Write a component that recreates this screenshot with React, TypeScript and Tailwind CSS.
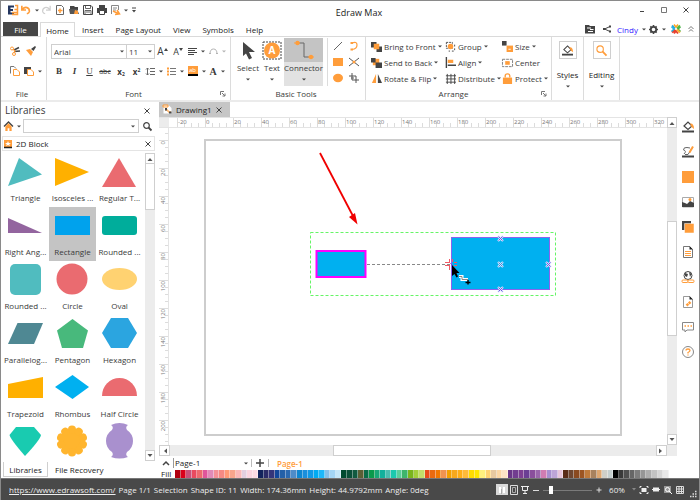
import type { ReactNode } from "react"

const ORANGE = "#ff9d3b"
const DARK = "#444444"

const menuTabs = ["Insert", "Page Layout", "View", "Symbols", "Help"]

const swatches = [
  "#b00012", "#d9001b", "#c8507a", "#e84a5f", "#ec6a6f", "#e0559b", "#e08ab8", "#f49097", "#f58a84", "#ff9a76", "#f7a58c", "#f9b8b8", "#e3cfe0", "#fbd5e0", "#fddbe4",
  "#12235c", "#2b2c68", "#34357a", "#12479a", "#2360a8", "#2a69b0", "#4f8cc9", "#0f86d0", "#1b8fdc", "#1199e6", "#00aaf2", "#1db7fa", "#85bfe9", "#a3d5f5", "#c5e6f8",
  "#004a30", "#0a4f38", "#115a40", "#5b5f35", "#0a6b48", "#0a9a4c", "#19a878", "#12b09c", "#4cbdb0", "#1bc9ae", "#5ccf9a", "#3db56c", "#7ab51d", "#a3cf3a", "#c3dd6a",
  "#e84a1a", "#e96a10", "#f07800", "#f29350", "#f5a000", "#f8a81c", "#ffae17", "#ffba3a", "#ffdc00", "#ffe600", "#fff07e", "#ffd271", "#e8c9a0", "#fcd7a5", "#fde3c5",
  "#6a3687", "#723d90", "#7d3f92", "#6b3f94", "#8a4f9c", "#9a66ab", "#d07cb2", "#a78fd0", "#bda5d8", "#e8c6dc",
  "#5a2c18", "#6e4630", "#8a4a20", "#9c5522", "#bf7b3c", "#a8825e", "#dda771", "#cfcfc8", "#c5cfcf",
  "#000000", "#3a3a3a", "#505050", "#666666", "#7d7d7d", "#969696", "#adadad", "#c3c3c3", "#d6d6d6", "#e9e9e9",
]

const shapes: { name: string; art: ReactNode; selected?: boolean }[] = [
  { name: "Triangle", art: <path d="M11 3 34 19.500 0 31Z" fill="#50bcbf" /> },
  { name: "Isosceles ...", art: <path d="M0 3 34 17 0 31Z" fill="#ffb000" /> },
  { name: "Regular T...", art: <path d="M17 3 34 32H0Z" fill="#ea6b70" /> },
  { name: "Right Ang...", art: <path d="M0 9 34 24H0Z" fill="#93659f" /> },
  { name: "Rectangle", art: <rect y="7" width="35" height="19" fill="#00a2ed" />, selected: true },
  { name: "Rounded ...", art: <rect y="7" width="35" height="19" rx="3" fill="#00ad9b" /> },
  { name: "Rounded ...", art: <rect x="2" y="1" width="31" height="31" rx="5" fill="#50bcbf" /> },
  { name: "Circle", art: <circle cx="17" cy="16" r="15.500" fill="#ea6b70" /> },
  { name: "Oval", art: <ellipse cx="17.500" cy="16" rx="17.500" ry="11" fill="#ffd271" /> },
  { name: "Parallelog...", art: <path d="M9.500 6H35L26 27H0Z" fill="#4f8893" /> },
  { name: "Pentagon", art: <path d="M17.500 2 33 13.500 28 31H7L2 13.500Z" fill="#48b97c" /> },
  { name: "Hexagon", art: <path d="M9 1H26L35 16 26 31H9L0 16Z" fill="#2ba5e0" /> },
  { name: "Trapezoid", art: <path d="M0 13 35 6V27H0Z" fill="#ffb000" /> },
  { name: "Rhombus", art: <path d="M17.500 4 34 16 17.500 28 0 16Z" fill="#00b0f0" /> },
  { name: "Half Circle", art: <path d="M0 25A17.500 18 0 0 1 35 25Z" fill="#ea6b70" /> },
  { name: "", art: <path d="M8 2H26L33 10Q32 15 17 31Q3 15 1.500 10Z" fill="#19cbb0" /> },
  {
    name: "",
    art: (
      <g fill="#ffb52e">
        <circle cx="17" cy="16" r="12.500" />
        {[0, 36, 72, 108, 144, 180, 216, 252, 288, 324].map((a) => (
          <circle key={a} cx="17" cy="4.500" r="4" transform={`rotate(${a} 17 16)`} />
        ))}
      </g>
    ),
  },
  {
    name: "",
    art: (
      <path
        d="M9 0Q17.500-4 26 0Q23 2 25 5Q31 9 31 16T25 27Q23 30 26 32Q17.500 35 9 32Q12 30 10 27Q4 23 4 16T10 5Q12 2 9 0Z"
        fill="#a990ce"
      />
    ),
  },
]

function Icon({ children, size = "size-3", box = 12 }: { children: ReactNode; size?: string; box?: number }) {
  return (
    <svg className={`${size} shrink-0 overflow-visible`} viewBox={`0 0 ${box} ${box}`} fill="none" aria-hidden="true">
      {children}
    </svg>
  )
}

function Caret() {
  return (
    <svg className="w-1 h-[3px] shrink-0" viewBox="0 0 4 3" aria-hidden="true">
      <path d="M0 .5H4L2 2.500Z" fill={DARK} />
    </svg>
  )
}

function IconButton({ label, className = "w-[14px]", children }: { label: string; className?: string; children: ReactNode }) {
  return (
    <button type="button" aria-label={label} className={`flex shrink-0 items-center justify-center gap-1 ${className}`}>
      {children}
    </button>
  )
}

function Launcher() {
  return (
    <Icon size="size-[6px]" box={6}>
      <path d="M.5 4V.5H4M2 2 5 5M5 2.500V5H2.500" stroke="#777" />
    </Icon>
  )
}

function Group({ title, className, launcher, children }: { title: string; className: string; launcher?: boolean; children: ReactNode }) {
  return (
    <section className={`flex shrink-0 flex-col border-r border-[#dcdcdc] ${className}`}>
      <div className="flex-1">{children}</div>
      <div className="flex h-[13px] items-center pr-1">
        <h2 className="flex-1 text-center">{title}</h2>
        {launcher && <Launcher />}
      </div>
    </section>
  )
}

function TitleBar() {
  return (
    <header className="flex h-[21px] shrink-0 items-center pb-[3px] pl-1">
      <IconButton label="Edraw" className="w-[16px]">
        <Icon>
          <path d="M1 1.500H7V3.500H3.500V5H6V7H3.500V8.500H7V10.500H1Z" fill="#24365f" />
          <path d="M8 1.500H10.500V10.500H5M7.500 5.500H10M5 8.500H10" stroke={ORANGE} strokeWidth="1.500" />
        </Icon>
      </IconButton>
      <IconButton label="Undo" className="w-[18px]">
        <Icon size="size-[10px]">
          <path d="M1 1V6H6M1.500 5.500C5 1 10.500 3 10 8Q9.500 10 7 10.500" stroke={ORANGE} strokeWidth="2" />
        </Icon>
        <Caret />
      </IconButton>
      <IconButton label="Redo" className="w-[14px]">
        <Icon size="size-[10px]">
          <path d="M11 1V6H6M10.500 5.500C7 1 1.500 3 2 8Q2.500 10 5 10.500" stroke="#cfcfcf" strokeWidth="1.500" />
        </Icon>
      </IconButton>
      <IconButton label="New">
        <Icon size="size-[10px]" box={10}>
          <path d="M1.500.5H6.500L8.500 2.500V9.500H1.500Z" stroke="#666" />
          <path d="M5 3.500V8M3 5.500H7.500" stroke={ORANGE} strokeWidth="1.500" />
        </Icon>
      </IconButton>
      <IconButton label="Open">
        <Icon size="size-[10px]" box={10}>
          <path d="M1 1H5L6 2H9V5H1Z" fill={DARK} />
          <path d="M0 4H8L10 9H1Z" fill="#555" />
          <path d="M6 5 9 6V9H5Z" fill={ORANGE} />
        </Icon>
      </IconButton>
      <IconButton label="Save">
        <Icon size="size-[10px]" box={10}>
          <path d="M.5.500H8L9.500 2V9.500H.5Z" stroke={DARK} />
          <path d="M2.500 1V3.500H7.500V1M2 9V5.500H8V9M3 7H7" stroke="#666" />
        </Icon>
      </IconButton>
      <IconButton label="Print">
        <Icon size="size-[10px]" box={10}>
          <path d="M2 0H8V3H2ZM0 3H10V8H0Z" fill={DARK} />
          <path d="M2.500 5.500H7.500V9.500H2.500Z" fill="#fff" stroke={DARK} />
        </Icon>
      </IconButton>
      <IconButton label="Export" className="w-[20px]">
        <Icon size="size-[10px]" box={10}>
          <path d="M1.500 9V.5H8.500V5M3 3H7M3 5H6" stroke="#888" />
          <path d="M3 6 9 9M7 5 9.500 9 5 9.500" stroke={ORANGE} strokeWidth="1.500" />
        </Icon>
        <Caret />
      </IconButton>
      <IconButton label="Customize" className="w-[10px] flex-col">
        <Icon size="size-[6px]" box={6}>
          <path d="M1 1H5" stroke={DARK} />
          <path d="M1 3H5L3 5.500Z" fill={DARK} />
        </Icon>
      </IconButton>
      <h1 className="flex-1 pl-[116px] pt-1 text-center text-[9px] text-[#222]">Edraw Max</h1>
      <div className="flex w-[236px] items-center justify-end pr-[2px]">
        <IconButton label="Minimize" className="w-[22px]">
          <Icon size="size-[6px]" box={6}><path d="M1 4.500H5" stroke={DARK} /></Icon>
        </IconButton>
        <IconButton label="Maximize" className="w-[22px]">
          <Icon size="size-[6px]" box={6}><path d="M.5.500H5.500V5.500H.5Z" stroke="#777" /></Icon>
        </IconButton>
        <IconButton label="Close" className="w-[22px]">
          <Icon size="size-[6px]" box={6}><path d="M.5.500 5.500 5.500M5.500.5.500 5.500" stroke={DARK} /></Icon>
        </IconButton>
      </div>
    </header>
  )
}

function MenuBar() {
  return (
    <nav className="flex h-[15px] shrink-0 items-center border-b border-[#dadada] pl-[2px] text-[#222]">
      <button type="button" className="h-[14px] w-[35px] bg-[#464646] text-white">File</button>
      <button type="button" className="ml-[2px] mr-[7px] h-[15px] w-[35px] self-start border border-b-0 border-[#dadada] bg-white -mb-px">Home</button>
      <div className="flex flex-1 gap-3">
        {menuTabs.map((t) => (
          <button type="button" key={t}>{t}</button>
        ))}
      </div>
      <div className="flex items-center pr-[2px]">
        <IconButton label="Files" className="w-[17px]">
          <Icon size="size-[10px]" box={10}>
            <path d="M0 1H4L5 2H10V9.500H0Z" fill={DARK} />
            <path d="M2 4H6M5 5.500H8.500M3 7.500H8" stroke="#fff" />
          </Icon>
        </IconButton>
        <IconButton label="Share" className="w-[17px]">
          <Icon size="size-2" box={8}>
            <path d="M7 1.500 1.500 4 7 6.500" stroke={DARK} />
            <path d="M6 .5H8V2.500H6ZM0 3H2V5H0ZM6 5.500H8V7.500H6Z" fill={DARK} />
          </Icon>
        </IconButton>
        <button type="button" className="flex w-[33px] items-center justify-center gap-1 text-[#3320ff]">Cindy <Caret /></button>
        <IconButton label="Settings" className="w-[19px]">
          <Icon size="size-[9px]" box={10}>
            <circle cx="5" cy="5" r="3" stroke={DARK} strokeWidth="2" />
            <path d="M5 0V2M5 8V10M0 5H2M8 5H10M1.500 1.500 3 3M7 7 8.500 8.500M8.500 1.500 7 3M3 7 1.500 8.500" stroke={DARK} strokeWidth="1.800" />
          </Icon>
          <Caret />
        </IconButton>
        <IconButton label="Apps" className="w-[18px]">
          <Icon size="size-[10px]" box={10}>
            <path d="M1 1.500 4 4.500" stroke="#2aa7e0" strokeWidth="2" />
            <path d="M3 .5 5 3 7 .5" stroke="#ffa51f" strokeWidth="1.500" />
            <path d="M9 1.500 6 4.500" stroke="#5cba3c" strokeWidth="2" />
            <path d="M9.500 3 7 5 9.500 7.500" stroke="#3fae49" strokeWidth="1.500" />
            <path d="M1 8.500 4 5.500M3 9.500 5 7 7 9.500" stroke="#e8402f" strokeWidth="2" />
            <path d="M.5 3 3 5 .5 7.500" stroke="#21b6e6" strokeWidth="1.500" />
            <path d="M9 8.500 6 5.500" stroke="#f9b233" strokeWidth="2" />
          </Icon>
        </IconButton>
        <IconButton label="Collapse ribbon" className="w-[12px]">
          <Icon size="size-[6px]" box={6}>
            <path d="M.5 3 3 .5 5.500 3M1 5.500 3 3.500 5 5.500" stroke="#777" />
          </Icon>
        </IconButton>
      </div>
    </nav>
  )
}

function FontGroup() {
  return (
    <Group title="Font" className="w-[184px]" launcher>
      <div className="flex h-5 items-center pl-1 mt-1">
        <label className="flex h-[15px] w-[76px] items-center border border-[#cfcfcf] px-[2px]">
          <select aria-label="Font" className="flex-1 appearance-none bg-transparent">
            <option>Arial</option>
          </select>
          <Caret />
        </label>
        <label className="-ml-px flex h-[15px] w-[29px] items-center border border-[#cfcfcf] px-[2px]">
          <select aria-label="Font size" className="w-4 flex-1 appearance-none bg-transparent">
            <option>11</option>
          </select>
          <Caret />
        </label>
        <IconButton label="Grow font" className="w-[15px]">
          <span className="text-[10px]">A</span>
          <svg className="-ml-1 mb-1 w-1 h-[3px]" viewBox="0 0 4 3"><path d="M0 3H4L2 0Z" fill={DARK} /></svg>
        </IconButton>
        <IconButton label="Shrink font" className="w-[16px]">
          <span className="text-[9px]">A</span>
          <svg className="-ml-1 mb-1 w-1 h-[3px]" viewBox="0 0 4 3"><path d="M0 0H4L2 3Z" fill={DARK} /></svg>
        </IconButton>
        <IconButton label="Align text" className="w-[20px]">
          <Icon size="size-[9px]" box={9}>
            <path d="M0 1.500H9M0 3.500H7M0 5.500H9M0 7.500H6" stroke={DARK} />
          </Icon>
          <Caret />
        </IconButton>
        <IconButton label="Text curve" className="w-[22px] opacity-40">
          <Icon size="size-[9px]" box={9}>
            <path d="M1 7Q1 2 4.500 2T8 7" stroke={DARK} />
            <path d="M0 6.500H2M7 6.500H9" stroke={DARK} />
          </Icon>
          <Caret />
        </IconButton>
      </div>
      <div className="flex h-5 items-center pl-1">
        <IconButton label="Bold" className="w-4 font-['Liberation_Serif'] text-[9px] font-bold">B</IconButton>
        <IconButton label="Italic" className="w-[15px] font-['Liberation_Serif'] text-[9px] font-bold italic">I</IconButton>
        <IconButton label="Underline" className="w-[15px] font-['Liberation_Serif'] text-[9px] underline">U</IconButton>
        <IconButton label="Strikethrough" className="w-4 text-[7px] line-through">abc</IconButton>
        <IconButton label="Subscript" className="w-4 font-bold"><span>x<sub className="text-[5px]">2</sub></span></IconButton>
        <IconButton label="Superscript" className="w-[15px] font-bold"><span>x<sup className="text-[5px]">2</sup></span></IconButton>
        <IconButton label="Line spacing" className="w-[21px]">
          <Icon size="size-[9px]" box={9}>
            <path d="M4 1.500H9M4 4.500H9M4 7.500H9M1.500 1V8M0 2.500 1.500 1 3 2.500M0 6.500 1.500 8 3 6.500" stroke="#666" />
          </Icon>
          <Caret />
        </IconButton>
        <IconButton label="Bullets" className="w-[21px]">
          <Icon size="size-[9px]" box={9}>
            <path d="M3 1.500H9M3 4.500H9M3 7.500H9" stroke="#777" />
            <path d="M0 1.500H2M0 4.500H2M0 7.500H2" stroke={ORANGE} strokeWidth="1.800" />
          </Icon>
          <Caret />
        </IconButton>
        <IconButton label="Highlight" className="w-[21px]">
          <span className="flex h-[10px] w-[10px] items-center justify-center border-b-2 border-black bg-[#ff9d3b] text-[6px] text-white">ab</span>
          <Caret />
        </IconButton>
        <IconButton label="Font color" className="w-[20px]">
          <span className="font-['Liberation_Serif'] text-[10px] font-bold">A</span>
          <Caret />
        </IconButton>
      </div>
    </Group>
  )
}

function ToolsGroup() {
  return (
    <Group title="Basic Tools" className="w-[135px]">
      <div className="flex pt-px pl-[5px]">
        <button type="button" className="flex h-[48px] w-6 flex-col items-center pb-1">
          <Icon size="size-6" box={24}>
            <path d="M7 4 19 14H13L16 20 13 21.500 10 15.500 7 18Z" fill={DARK} />
          </Icon>
          <span className="mb-[5px]">Select</span>
          <Caret />
        </button>
        <button type="button" className="flex h-[48px] w-6 flex-col items-center pb-1">
          <Icon size="size-6" box={24}>
            <rect x="3" y="4" width="18" height="17" stroke={DARK} strokeDasharray="2 1" />
            <circle cx="12" cy="12.500" r="8" fill={ORANGE} />
            <text x="12" y="16" textAnchor="middle" className="text-[10px] font-bold" fill="#fff">A</text>
          </Icon>
          <span className="mb-[5px]">Text</span>
          <Caret />
        </button>
        <button type="button" className="flex h-[48px] w-[39px] flex-col items-center bg-[#e2e2e2] pb-1">
          <span className="flex h-6 w-full justify-center bg-[#c4c4c4]">
            <Icon size="size-6" box={24}>
              <path d="M6 5H12V19H18" stroke="#666" />
              <circle cx="5.500" cy="5" r="2.200" fill={ORANGE} />
              <circle cx="19" cy="19" r="2.200" fill={ORANGE} />
              <path d="M2 5H8M16 19H22" stroke={ORANGE} />
            </Icon>
          </span>
          <span className="mb-[5px]">Connector</span>
          <Caret />
        </button>
        <div className="ml-1 grid grid-cols-[16px_16px] grid-rows-3 border-l border-[#dcdcdc] pl-[3px]">
          <IconButton label="Line">
            <Icon size="size-[10px]" box={10}><path d="M1 9 9 1" stroke="#666" /></Icon>
          </IconButton>
          <IconButton label="Arc">
            <Icon size="size-[10px]" box={10}><path d="M3 2Q8 0 8 4T3 8.500" stroke={ORANGE} strokeWidth="1.200" /><path d="M1.500 1H4V3H1.500ZM1.500 7.500H4V9.500H1.500Z" fill={ORANGE} /></Icon>
          </IconButton>
          <IconButton label="Rectangle">
            <Icon size="size-[10px]" box={10}><path d="M0 1H10V9H0Z" fill={ORANGE} /></Icon>
          </IconButton>
          <IconButton label="Cross lines">
            <Icon size="size-[10px]" box={10}><path d="M0 1 10 9M10 1 0 9" stroke="#555" /><circle cx="5" cy="5" r="1.500" fill={ORANGE} /></Icon>
          </IconButton>
          <IconButton label="Ellipse">
            <Icon size="size-[10px]" box={10}><ellipse cx="5" cy="5" rx="5" ry="4.200" fill={ORANGE} /></Icon>
          </IconButton>
          <IconButton label="Crop">
            <Icon size="size-[10px]" box={10}><path d="M3 0V7H10M0 3H7V10M2 5H5" stroke="#555" /></Icon>
          </IconButton>
        </div>
      </div>
    </Group>
  )
}

function ArrangeItem({ label, caret = true, children }: { label: string; caret?: boolean; children: ReactNode }) {
  return (
    <button type="button" className="flex items-center gap-[2px] whitespace-nowrap">
      <Icon size="size-[11px]">{children}</Icon>
      {label}
      {caret && <span className="flex"><Caret /></span>}
    </button>
  )
}

function ArrangeGroup() {
  return (
    <Group title="Arrange" className="w-[186px]" launcher>
      <div className="grid h-[49px] grid-cols-[74px_57px_50px] grid-rows-3 pl-[5px] pt-[2px]">
        <ArrangeItem label="Bring to Front">
          <path d="M0 1H6V7H0ZM6 6H12V12H6Z" fill={DARK} /><path d="M3 3H9V9H3Z" fill={ORANGE} />
        </ArrangeItem>
        <ArrangeItem label="Group">
          <path d="M1.500 1.500H8V8H1.500Z" stroke={DARK} strokeDasharray="2 1" /><circle cx="6" cy="6" r="3" fill={ORANGE} /><path d="M10.500 4V11H4" stroke={DARK} strokeDasharray="2 2" />
        </ArrangeItem>
        <ArrangeItem label="Size">
          <path d="M0 0H5V5H0Z" fill={DARK} /><path d="M5 5H12V12H5Z" fill={ORANGE} /><path d="M7 9H9.500" stroke="#fff" />
        </ArrangeItem>
        <ArrangeItem label="Send to Back">
          <path d="M2 2H9V9H2Z" fill={ORANGE} /><path d="M0 1H5V6H0ZM5 6H12V12H5Z" fill={DARK} />
        </ArrangeItem>
        <ArrangeItem label="Align">
          <path d="M1.500 0V12M3 9H12" stroke={DARK} strokeWidth="1.500" /><path d="M3 3H9V6.500H3Z" fill={ORANGE} />
        </ArrangeItem>
        <ArrangeItem label="Center" caret={false}>
          <path d="M.5 2.500H11.500V10.500H.5Z" stroke="#777" strokeDasharray="3 1" /><path d="M3.500 4.500H8.500V8.500H3.500Z" fill={ORANGE} />
        </ArrangeItem>
        <ArrangeItem label="Rotate &amp; Flip">
          <path d="M5.500 1V11H1Z" fill={ORANGE} /><path d="M7.500 1V11H12Z" fill={DARK} />
        </ArrangeItem>
        <ArrangeItem label="Distribute">
          <path d="M2.500 1V12M6.500 1V12M10.500 1V12M1 3H12M1 6.500H12M1 10H12" stroke={DARK} />
        </ArrangeItem>
        <ArrangeItem label="Protect">
          <path d="M1 5H11V12H1Z" fill={ORANGE} /><path d="M3.500 5V3Q3.500 1 6 1T8.500 3V5" stroke={ORANGE} strokeWidth="1.500" />
        </ArrangeItem>
      </div>
    </Group>
  )
}

function BucketArt() {
  return (
    <>
      <path d="M2 5 6 1 10 5 6 8.500Z" stroke={DARK} strokeWidth="1.200" />
      <path d="M8 2.500Q12 2 12 8L9.500 6Z" fill={ORANGE} />
      <path d="M0 10.500H12" stroke={DARK} strokeWidth="2" />
    </>
  )
}

function BigButton({ label, className, children }: { label: string; className: string; children: ReactNode }) {
  return (
    <button type="button" className={`flex shrink-0 flex-col items-center border-r border-[#dcdcdc] pt-1 text-[#222] ${className}`}>
      <span className="mb-[10px] flex size-[18px] items-center justify-center border border-[#cfcfcf]">
        <Icon size="size-[11px]">{children}</Icon>
      </span>
      <span className="mb-[5px]">{label}</span>
      <Caret />
    </button>
  )
}

function Ribbon() {
  return (
    <div className="flex h-[63px] shrink-0 overflow-hidden pl-px">
      <Group title="File" className="w-[45px]">
        <div className="mt-1 flex h-5 items-center pl-1">
          <IconButton label="Cut" className="w-[17px]">
            <Icon size="size-[10px]" box={10}>
              <path d="M4 4 9 1.500M4 5.500 10 5" stroke={DARK} strokeWidth="1.500" />
              <circle cx="2" cy="2.500" r="1.500" stroke={ORANGE} /><circle cx="4" cy="8" r="1.500" stroke={ORANGE} />
              <path d="M3 3 5 5 4 7" stroke={ORANGE} strokeWidth="1.200" />
            </Icon>
          </IconButton>
          <IconButton label="Format painter" className="w-4">
            <Icon size="size-[10px]" box={10}>
              <path d="M5 3 9 0 10 1 7.500 5Z" fill={DARK} /><path d="M0 4 4 3 7 6 5 10Z" fill={ORANGE} />
            </Icon>
          </IconButton>
        </div>
        <div className="flex h-5 items-center pl-1">
          <IconButton label="Copy" className="w-[17px]">
            <Icon size="size-[10px]" box={10}>
              <path d="M.5 7.500V.5H4L6 2.500" stroke="#777" /><path d="M3.500 3.500H7L9.500 6V9.500H3.500Z" fill="#fff" stroke={ORANGE} />
            </Icon>
          </IconButton>
          <IconButton label="Paste" className="w-[20px]">
            <Icon size="size-[10px]" box={10}>
              <path d="M0 1H7V8H0Z" fill={DARK} /><path d="M3.500 3.500H7L9.500 6V9.500H3.500Z" fill="#fff" stroke={ORANGE} />
            </Icon>
            <Caret />
          </IconButton>
        </div>
      </Group>
      <FontGroup />
      <ToolsGroup />
      <ArrangeGroup />
      <BigButton label="Styles" className="w-8"><BucketArt /></BigButton>
      <BigButton label="Editing" className="w-9">
        <circle cx="4.500" cy="4.500" r="3.500" stroke={ORANGE} strokeWidth="1.200" /><path d="M7 7 11.500 11.500" stroke={ORANGE} strokeWidth="2" />
      </BigButton>
    </div>
  )
}

function ScrollButton({ label, className, d }: { label: string; className: string; d: string }) {
  return (
    <button type="button" aria-label={label} className={`flex shrink-0 items-center justify-center border border-[#cfcfcf] bg-white ${className}`}>
      <Icon size="size-[6px]" box={6}><path d={d} fill="#555" /></Icon>
    </button>
  )
}

const UP = "M.5 5H5.500L3 2Z"
const DOWN = "M.5 1H5.500L3 4Z"
const LEFT = "M5 .5V5.500L2 3Z"
const RIGHT = "M1 .5V5.500L4 3Z"

function CloseIcon() {
  return <Icon size="size-[6px]" box={6}><path d="M.5.500 5.500 5.500M5.500.5.500 5.500" stroke={DARK} /></Icon>
}

function LibraryPanel() {
  return (
    <aside className="flex w-[156px] shrink-0 flex-col pl-px pr-[2px]">
      <div className="flex h-[17px] items-center pl-[3px] pr-1">
        <h2 className="flex-1 text-[10px]">Libraries</h2>
        <IconButton label="Close libraries" className="w-2"><CloseIcon /></IconButton>
      </div>
      <div className="flex h-[14px] items-center pl-[2px]">
        <IconButton label="Home" className="w-4">
          <Icon size="size-[9px]" box={10}>
            <path d="M0 5 5 0 10 5" stroke={DARK} strokeWidth="1.500" /><path d="M1.500 5 5 1.500 8.500 5V10H6V7H4V10H1.500Z" fill={ORANGE} />
          </Icon>
          <Caret />
        </IconButton>
        <label className="ml-[3px] flex h-[14px] min-w-0 flex-1 items-center border border-[#cfcfcf] pr-[3px]">
          <input aria-label="Search libraries" className="min-w-0 flex-1 px-1 outline-none" />
          <Caret />
        </label>
        <IconButton label="Search" className="w-4">
          <Icon size="size-[9px]" box={9}><circle cx="3.500" cy="3.500" r="2.800" stroke={DARK} strokeWidth="1.200" /><path d="M5.500 5.500 8.500 8.500" stroke={DARK} strokeWidth="1.800" /></Icon>
        </IconButton>
      </div>
      <div className="mt-[3px] flex h-[15px] items-center gap-1 border border-[#e4e4e4] pl-px pr-[3px] text-[#222]">
        <Icon size="size-[8px]" box={8}>
          <path d="M0 0H8V8H0Z" fill={ORANGE} /><path d="M0 7.500H8" stroke="#222" strokeWidth="1.500" />
          <path d="M4 1 4.800 3H7L5.200 4.200 6 6 4 5 2 6 2.800 4.200 1 3H3.200Z" fill="#fff" />
        </Icon>
        <h3 className="flex-1">2D Block</h3>
        <IconButton label="Close 2D Block" className="w-[6px]"><CloseIcon /></IconButton>
      </div>
      <div className="flex min-h-0 flex-1 pt-[2px]">
        <div className="grid flex-1 auto-rows-[54px] grid-cols-3 overflow-hidden">
          {shapes.map((s, i) => (
            <button
              type="button"
              key={i}
              className={`flex flex-col items-center pt-px ${s.selected ? "bg-[#c4c4c4]" : ""}`}
            >
              <svg className="h-[34px] w-[35px] overflow-visible" viewBox="0 -1 35 34" aria-hidden="true">{s.art}</svg>
              <span className="mt-1 whitespace-nowrap leading-[12px]">{s.name}</span>
            </button>
          ))}
        </div>
        <div className="ml-[2px] mb-[1px] flex w-[10px] flex-col bg-[#ececec]">
          <ScrollButton label="Scroll up" className="h-[11px]" d={UP} />
          <div className="h-[46px] border border-t-0 border-[#cfcfcf] bg-white" />
          <div className="flex-1" />
          <ScrollButton label="Scroll down" className="h-[11px]" d={DOWN} />
        </div>
      </div>
      <div className="flex h-[16px] shrink-0 items-start pl-px text-[#222]">
        <button type="button" className="h-[15px] w-[45px] border border-t-0 border-[#cfcfcf]">Libraries</button>
        <button type="button" className="h-[14px] px-[7px]">File Recovery</button>
      </div>
    </aside>
  )
}

// one tick every 5 units, a labelled one every 20
const hTicks = Array.from({ length: 72 }, (_, i) => i - 4)
const vTicks = Array.from({ length: 46 }, (_, i) => i - 1)

function HorizontalRuler() {
  return (
    <svg className="h-[11px] w-full overflow-hidden border-y border-[#e4e4e4]" aria-hidden="true">
      {hTicks.map((t) => (
        <path key={t} d={`M${46.500 + t * 7} ${t % 4 ? 5 : 0}V11`} stroke="#dcdcdc" />
      ))}
      {hTicks.filter((t) => t % 4 === 0).map((t) => (
        <text key={t} x={47 + t * 7} y="6" className="text-[6px]" fill="#777">{t * 5}</text>
      ))}
      <rect width="10" height="11" fill="#ececec" />
    </svg>
  )
}

function VerticalRuler() {
  return (
    <svg className="h-full w-[10px] shrink-0 overflow-hidden border-r border-[#e4e4e4]" aria-hidden="true">
      {vTicks.map((t) => (
        <path key={t} d={`M${t % 4 ? 6 : 0} ${12.500 + t * 7}H10`} stroke="#dcdcdc" />
      ))}
      {vTicks.filter((t) => t >= 0 && t <= 40 && t % 4 === 0).map((t) => (
        <text key={t} transform={`translate(6 ${13 + t * 7}) rotate(-90)`} textAnchor="end" className="text-[6px]" fill="#777">{t * 5}</text>
      ))}
    </svg>
  )
}

function Handle({ x, y, color }: { x: number; y: number; color: string }) {
  return (
    <g transform={`translate(${x} ${y})`}>
      <path d="M-2.500-2.500 2.500 2.500M2.500-2.500-2.500 2.500" stroke="#d8e8ff" strokeWidth="2.200" />
      <path d="M-2-2 2 2M2-2-2 2" stroke={color} />
    </g>
  )
}

function Drawing() {
  return (
    <svg className="h-full w-full" role="img" aria-label="Drawing page">
      <rect x="36" y="12" width="416" height="295" fill="#fff" stroke="#cdcdcd" strokeWidth="2" />
      <path d="M151 25 184 88" stroke="#f00000" strokeWidth="1.800" />
      <path d="M188.500 96.500 180 89 186 85Z" fill="#f00000" />
      <rect x="141.500" y="104.500" width="245" height="63" stroke="#66f566" strokeDasharray="3 2" fill="none" />
      <rect x="147.500" y="123" width="49" height="26" fill="#00b0f0" stroke="#f0f" strokeWidth="2" />
      <path d="M198 136.500H282" stroke="#888" strokeDasharray="3 2" />
      <rect x="282.500" y="109.500" width="98" height="52" fill="#00b0f0" stroke="#8a62ee" />
      <Handle x={331.500} y={110.500} color="#7a50e0" />
      <Handle x={331.500} y={136.500} color="#4a86d8" />
      <Handle x={331.500} y={161.500} color="#7a50e0" />
      <Handle x={379.500} y={136.500} color="#7a50e0" />
      <g stroke="#f05a64">
        <path d="M276 134.500H281M276 137.500H281M285 134.500H288M285 137.500H288M280.500 131V134M283.500 131V134M280.500 138V142M283.500 138V142" />
      </g>
      <path d="M281.500 135 283.500 138" stroke="#8a40d0" />
      <path d="M283 137V148L285.500 146 287.500 149.500 289 148.500 287.500 145H290.500Z" fill="#000" />
      <path d="M290 148.500H293V151.500H299" stroke="#fff" strokeWidth="3" fill="none" />
      <path d="M290 148.500H293V151.500H299" stroke="#888" fill="none" />
      <path d="M299 152V156.500M296.500 154.500H301.500" stroke="#000" strokeWidth="1.500" />
    </svg>
  )
}

function PageBar() {
  return (
    <div className="flex h-[14px] items-center text-[#222]">
      <IconButton label="Show pages" className="w-[14px]">
        <Icon size="size-2" box={8}><path d="M1 6 4 3 7 6" stroke={DARK} strokeWidth="1.500" /></Icon>
      </IconButton>
      <label className="flex w-[75px] items-center gap-1 border-l border-[#999] pl-px">
        <select aria-label="Page" className="flex-1 appearance-none bg-transparent leading-[10px]">
          <option>Page-1</option>
        </select>
        <Caret />
      </label>
      <IconButton label="Add page" className="ml-[3px] h-2 w-[18px] border-x border-[#bbb]">
        <Icon size="size-2" box={8}><path d="M4 0V8M0 4H8" stroke={DARK} strokeWidth="1.500" /></Icon>
      </IconButton>
      <button type="button" className="ml-2 font-semibold text-[#ff9d3b]">Page-1</button>
    </div>
  )
}

function Workspace() {
  return (
    <main className="flex min-w-0 flex-1 flex-col pl-[2px]">
      <div className="flex h-[15px] shrink-0">
        <div className="flex h-full w-[71px] items-center gap-1 bg-[#c6c6c6] pl-1 text-[#222]">
          <Icon size="size-[9px]" box={9}>
            <path d="M.5.500H6L8.500 3V8.500H.5Z" fill="#fff" /><path d="M0 0H5V2H0ZM2 5H5V7H8" stroke={ORANGE} /><path d="M2 3H4V5.500H2ZM6 6.500H8.500V8.500H6Z" fill={DARK} />
          </Icon>
          <h2 className="flex-1">Drawing1</h2>
          <IconButton label="Close Drawing1" className="mr-[10px] w-[6px]"><CloseIcon /></IconButton>
        </div>
      </div>
      <div className="flex min-h-0 flex-1">
        <div className="flex min-w-0 flex-1 flex-col">
          <HorizontalRuler />
          <div className="flex min-h-0 flex-1">
            <VerticalRuler />
            <Drawing />
          </div>
        </div>
        <div className="flex w-[10px] shrink-0 flex-col bg-[#ececec]">
          <ScrollButton label="Scroll up" className="h-[11px]" d={UP} />
          <div className="grow-[94] basis-0" />
          <div className="grow-[114] basis-0 border border-[#cfcfcf] bg-white" />
          <div className="grow-[99] basis-0" />
          <ScrollButton label="Scroll down" className="h-[11px]" d={DOWN} />
        </div>
      </div>
      <div className="flex h-[11px] shrink-0 bg-[#ececec]">
        <ScrollButton label="Scroll left" className="w-[11px]" d={LEFT} />
        <div className="grow-[163] basis-0" />
        <div className="grow-[157] basis-0 border border-[#cfcfcf] bg-white" />
        <div className="grow-[165] basis-0" />
        <ScrollButton label="Scroll right" className="w-[11px]" d={RIGHT} />
        <div className="w-[10px]" />
      </div>
      <PageBar />
      <div className="flex h-[8px] shrink-0 items-center pl-[2px] text-[#222]">
        <span className="w-[14px] leading-[8px]">Fill</span>
        <div className="mr-[8px] flex h-full flex-1">
          {swatches.map((c, i) => (
            <button type="button" key={i} aria-label={`Fill ${c}`} className="h-full flex-1 border-r border-white/40" style={{ backgroundColor: c }} />
          ))}
        </div>
      </div>
    </main>
  )
}

const sideTools: { label: string; art: ReactNode }[] = [
  { label: "Fill", art: <BucketArt /> },
  { label: "Line", art: <><path d="M2 8Q5 5 1.500 4 1.500 1 5 1.500L8 2M3 8.500H6L10.500 1.500" stroke="#666" /><path d="M11 .5 7.500 6.500" stroke={ORANGE} strokeWidth="2" /><path d="M0 10.500H12" stroke={DARK} strokeWidth="2" /></> },
  { label: "Theme", art: <path d="M0 0H12V12H0Z" fill={ORANGE} /> },
  { label: "Picture", art: <><path d="M.5 1.500H11.500V11H.5Z" stroke="#aaa" /><path d="M0 11V6L3 7 5 8 8 5 12 7V11Z" fill={DARK} /><circle cx="8" cy="3.500" r="1.500" fill={ORANGE} /></> },
  { label: "Layer", art: <><path d="M0 0H9V9H0Z" fill={DARK} /><path d="M2.500 2.500H12V12H2.500Z" fill={ORANGE} stroke="#fff" strokeWidth=".5" /></> },
  { label: "Notes", art: <><path d="M1.500.500H7.500L10.500 3.500V11.500H1.500Z" stroke="#777" /><path d="M7.500 0 11 3.500H7.500Z" fill="#222" /><path d="M3 5.500H9M3 7.500H9M3 9.500H9" stroke={ORANGE} /></> },
  { label: "Hyperlink", art: <><circle cx="6" cy="4.500" r="4" stroke={DARK} /><path d="M3 2 6 3 5 6 3 5ZM7 1 9.500 3 8 6Z" fill={DARK} /><rect x="0" y="9" width="6" height="2.500" rx="1" fill="#fff" stroke={ORANGE} /><rect x="6" y="9" width="6" height="2.500" rx="1" fill="#fff" stroke={ORANGE} /></> },
  { label: "Attachment", art: <><path d="M1.500.500H7.500L10.500 3.500V11.500H1.500Z" stroke="#999" /><path d="M7.500 0 11 3.500H7.500Z" fill="#222" /><path d="M4.500 9.500 8.500 6" stroke={ORANGE} strokeWidth="2.500" strokeDasharray="2.500 .5" /></> },
  { label: "Comment", art: <><path d="M.5 1.500H11.500V9H5L3 11V9H.5Z" stroke="#888" /><path d="M2.500 5H4M5.500 5H7M8.500 5H10" stroke={ORANGE} strokeWidth="1.500" /></> },
  { label: "Help", art: <><circle cx="6" cy="6" r="5.500" stroke="#888" /><path d="M4 4.500Q4 3 6 3T8 4.500Q8 5.500 6 6.500V7.500M6 8.500V9.500" stroke={ORANGE} strokeWidth="1.300" /></> },
]

function SideBar() {
  return (
    <aside className="flex w-[22px] shrink-0 flex-col items-center pt-3">
      {sideTools.map((t) => (
        <IconButton key={t.label} label={t.label} className="h-[25px] w-full shrink">
          <Icon>{t.art}</Icon>
        </IconButton>
      ))}
    </aside>
  )
}

function StatusBar() {
  return (
    <footer className="flex h-[22px] shrink-0 items-center gap-[3px] border-t border-[#777] bg-[#494949] pl-2 text-[#eeeeee] whitespace-nowrap">
      <a href="#" className="underline">https://www.edrawsoft.com/</a>
      <span>Page 1/1</span>
      <span>Selection</span>
      <span>Shape ID: 11</span>
      <span>Width: 174.36mm</span>
      <span>Height: 44.9792mm</span>
      <span>Angle: 0deg</span>
      <div className="ml-auto flex items-center">
        <IconButton label="Normal view" className="h-[11px] w-[12px] bg-[#d8d8d8]">
          <Icon size="size-2" box={8}><path d="M1 1H3V7H1ZM5 1H7V7H5Z" fill="#fff" /><path d="M3.500 3V8" stroke="#aaa" /></Icon>
        </IconButton>
        <IconButton label="Page view" className="w-[11px]">
          <Icon size="size-[10px]" box={10}><path d="M1.500.5H8.500V9.500H1.500Z" stroke="#ddd" /><path d="M3.500 2.500H6.500V7.500H3.500Z" stroke="#aaa" /></Icon>
        </IconButton>
        <IconButton label="Presentation" className="w-[11px]">
          <Icon size="size-2" box={8}><path d="M0 .5H8M1.500 1V4.500H6.500V1M4 5V7M2 7.500H6" stroke="#eee" /></Icon>
        </IconButton>
        <IconButton label="Zoom out" className="w-[11px]">
          <Icon size="size-[6px]" box={6}><path d="M0 3.500H6" stroke="#ddd" /></Icon>
        </IconButton>
        <input
          type="range"
          aria-label="Zoom"
          min="0"
          max="100"
          defaultValue="14"
          className="mx-[2px] h-2 w-[49px] appearance-none bg-linear-to-b from-transparent from-45% via-[#ccc] via-50% to-transparent to-60% [&::-webkit-slider-thumb]:h-2 [&::-webkit-slider-thumb]:w-1 [&::-webkit-slider-thumb]:appearance-none [&::-webkit-slider-thumb]:bg-white"
        />
        <IconButton label="Zoom in" className="w-[10px]">
          <Icon size="size-[6px]" box={6}><path d="M3 .5V5.500M.5 3H5.500" stroke="#ddd" /></Icon>
        </IconButton>
        <span className="w-[26px] text-center">60%</span>
        <IconButton label="Zoom level" className="w-2">
          <svg className="w-1 h-[3px]" viewBox="0 0 4 3"><path d="M0 0H4L2 2.500Z" fill="#888" /></svg>
        </IconButton>
        <IconButton label="Fit page" className="w-[12px]">
          <Icon size="size-2" box={8}><path d="M1.500 2H6.500V6H1.500Z" fill="#eee" /><path d="M0 2V.5H1.500M6.500.5H8V2M8 6V7.500H6.500M1.500 7.500H0V6" stroke="#eee" /></Icon>
        </IconButton>
        <IconButton label="Fit width" className="w-[12px]">
          <Icon size="size-2" box={8}><path d="M1 1.500H7V5.500H1ZM0 3H8V4H0Z" fill="#eee" /></Icon>
        </IconButton>
        <IconButton label="Zoom area" className="w-[12px]">
          <Icon size="size-2" box={8}><path d="M0 0H7V7H0Z" fill="#999" /><circle cx="3.500" cy="3.500" r="2" stroke="#fff" /><path d="M5 5 8 8" stroke="#fff" /></Icon>
        </IconButton>
        <IconButton label="Grid" className="w-[12px]">
          <Icon size="size-2" box={8}><path d="M.5.500H7.500V7.500H.5ZM.5 3H7.500M.5 5.500H7.500M3 .5V7.500M5.500.5V7.500" stroke="#ddd" /></Icon>
        </IconButton>
      </div>
      <svg className="mb-[2px] mr-[2px] size-2 self-end" viewBox="0 0 8 8" aria-hidden="true">
        <path d="M6 1.500H7.500M3.500 4H5M6 4H7.500M1 6.500H2.500M3.500 6.500H5M6 6.500H7.500" stroke="#ddd" strokeWidth="1.500" />
      </svg>
    </footer>
  )
}

export default function App() {
  return (
    <div className="flex h-screen w-full flex-col overflow-hidden border-l border-r border-t border-[#8a8a8a] bg-white font-['Open_Sans',sans-serif] text-[8px] leading-[11px] text-[#3a3a3a]">
      <TitleBar />
      <MenuBar />
      <Ribbon />
      <div className="h-[2px] shrink-0 bg-[#ebebeb]" />
      <div className="flex min-h-0 flex-1">
        <LibraryPanel />
        <Workspace />
        <SideBar />
      </div>
      <StatusBar />
    </div>
  )
}
